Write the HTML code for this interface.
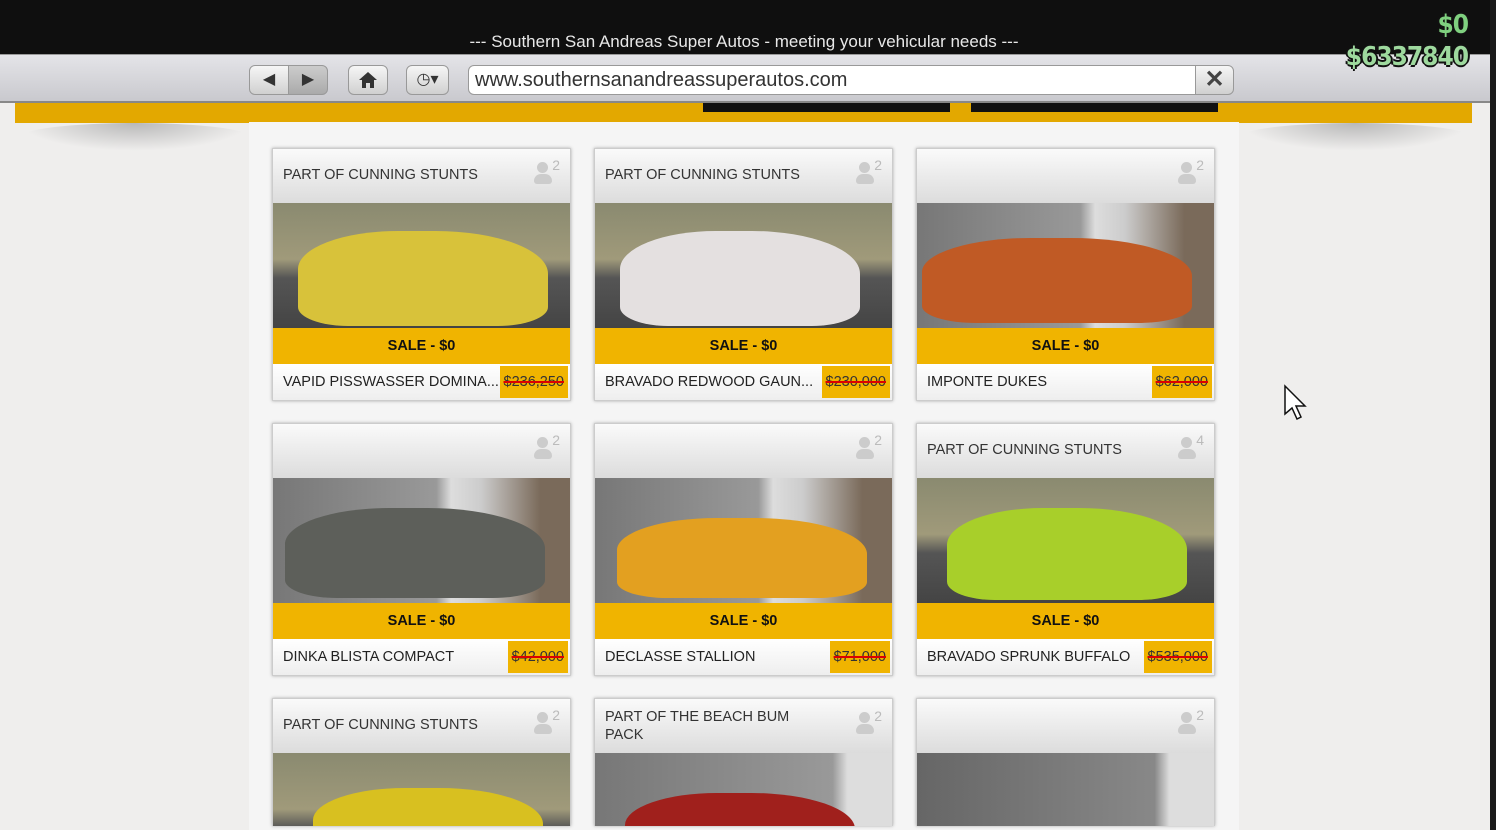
<!DOCTYPE html>
<html style="width:1496px;height:830px;overflow:hidden"><head><meta charset="utf-8"><style>
*{margin:0;padding:0;box-sizing:border-box}
body{width:1496px;height:830px;overflow:hidden;background:#efeeed;font-family:"Liberation Sans",sans-serif;position:relative}
.top{position:absolute;left:0;top:0;width:1496px;height:54px;background:#0f0f0f}
.title{position:absolute;top:32px;left:0;width:1488px;text-align:center;color:#e8e8e8;font-size:17px}
.bar{position:absolute;left:0;top:54px;width:1490px;height:49px;background:linear-gradient(#e4e4e8,#c9c9ce);border-top:1px solid #999;border-bottom:2px solid #888}
.rstrip{position:absolute;right:0;top:0;width:6px;height:830px;background:#1a1a1a}
.btn{position:absolute;top:65px;height:30px;border:1px solid #999;border-radius:6px;background:linear-gradient(#f6f6f6,#d0d0d0);color:#333;font-size:16px;text-align:center;line-height:28px}
.url{position:absolute;left:468px;top:65px;width:728px;height:30px;background:#fff;border:1px solid #999;border-radius:6px 0 0 6px;font-size:20px;color:#333;padding-left:6px;line-height:28px}
.x{position:absolute;left:1195px;top:65px;width:39px;height:30px;border:1px solid #999;border-radius:0 6px 6px 0;background:linear-gradient(#f6f6f6,#d0d0d0);font-size:24px;line-height:28px;text-align:center;color:#444;font-weight:bold}
.money{position:absolute;right:28px;font-family:"DejaVu Sans Condensed","DejaVu Sans",sans-serif;font-weight:bold;color:#9ed99e;text-shadow:-2px 0 #111,2px 0 #111,0 -2px #111,0 2px #111;letter-spacing:-1px}
.yb{position:absolute;left:15px;top:103px;width:1457px;height:20px;background:#e3a800}
.shadow{position:absolute;top:123px;height:28px;border-radius:50%;background:radial-gradient(ellipse at top,#b8b8b8,transparent 70%)}
.panel{position:absolute;left:249px;top:122px;width:990px;height:708px;background:#f5f5f5}
.card{position:absolute;width:299px;height:253px;background:#fff;box-shadow:0 0 3px #aaa;border:1px solid #ccc;overflow:hidden}
.hd{height:54px;background:linear-gradient(#fafafa,#dcdcdc);position:relative;font-size:14.5px;color:#333;padding:18px 10px 0}
.hd.two{padding-top:9px;line-height:18px}
.p{position:absolute;right:10px;top:9px;width:26px;height:30px}
.p i{position:absolute;left:3px;top:4px;width:11px;height:11px;border-radius:50%;background:#ccc}
.p b{position:absolute;left:0;top:16px;width:18px;height:10px;border-radius:7px 7px 3px 3px;background:#ccc}
.p span{position:absolute;right:0;top:-1px;font-size:14px;color:#bbb}
.img{height:125px;position:relative;overflow:hidden}
.sale{height:36px;background:#f0b400;text-align:center;font-size:14.5px;font-weight:bold;line-height:36px;color:#111}
.nm{height:36px;position:relative;font-size:14.5px;color:#222;line-height:36px;padding-left:10px;background:linear-gradient(#fff,#eee)}
.pr{position:absolute;right:2px;top:2px;height:32px;background:#f0b400;padding:0 4px;line-height:32px;color:#333;text-decoration:line-through;text-decoration-color:#d00;text-decoration-thickness:2px}
.car{position:absolute;border-radius:40% 45% 20% 20%}
</style></head><body>
<div class="top"></div>
<div class="title">--- Southern San Andreas Super Autos - meeting your vehicular needs ---</div>
<div class="bar"></div>
<div class="btn" style="left:249px;width:40px;border-radius:6px 0 0 6px">◀</div>
<div class="btn" style="left:288px;width:40px;border-radius:0 6px 6px 0;background:linear-gradient(#ccc,#aaa)">▶</div>
<div class="btn" style="left:348px;width:40px"><svg width="20" height="18" viewBox="0 0 20 18" style="margin-top:5px"><path d="M10 1 L19 9 H16 V17 H12 V12 H8 V17 H4 V9 H1 Z" fill="#333"/></svg></div>
<div class="btn" style="left:406px;width:43px">◷▾</div>
<div class="url">www.southernsanandreassuperautos.com</div>
<div class="x">✕</div>
<div class="money" style="top:10px;font-size:26px;color:#7fd07f">$0</div>
<div class="money" style="top:42px;font-size:26px">$6337840</div>
<div class="yb"></div>
<div style="position:absolute;left:703px;top:103px;width:247px;height:9px;background:#111"></div>
<div style="position:absolute;left:971px;top:103px;width:247px;height:9px;background:#111"></div>
<div class="shadow" style="left:20px;width:230px"></div>
<div class="shadow" style="left:1240px;width:230px"></div>
<div class="panel"></div>
<div class="rstrip"></div>
<svg style="position:absolute;left:1283px;top:384px" width="26" height="38" viewBox="0 0 26 38"><path d="M2 2 L2 30 L9 24 L14 35 L18 33 L13 22 L22 22 Z" fill="#fff" stroke="#111" stroke-width="1.5"/></svg>

<div class="card" style="left:272px;top:148px"><div class="hd">PART OF CUNNING STUNTS<div class="p"><i></i><b></b><span>2</span></div></div>
<div class="img" style="background:linear-gradient(#8a8a70 0,#a09a7a 45%,#555 60%,#444)"><div class="car" style="left:25px;top:28px;width:250px;height:95px;background:#d8c23a"></div></div>
<div class="sale">SALE - $0</div><div class="nm">VAPID PISSWASSER DOMINA...<span class="pr">$236,250</span></div></div>
<div class="card" style="left:594px;top:148px"><div class="hd">PART OF CUNNING STUNTS<div class="p"><i></i><b></b><span>2</span></div></div>
<div class="img" style="background:linear-gradient(#8a8a70 0,#a09a7a 45%,#555 60%,#444)"><div class="car" style="left:25px;top:28px;width:240px;height:95px;background:#e4e0e0"></div></div>
<div class="sale">SALE - $0</div><div class="nm">BRAVADO REDWOOD GAUN...<span class="pr">$230,000</span></div></div>
<div class="card" style="left:916px;top:148px"><div class="hd"><div class="p"><i></i><b></b><span>2</span></div></div>
<div class="img" style="background:linear-gradient(90deg,#777 0,#999 55%,#ddd 60%,#ccc 70%,#7a6a5a 90%)"><div class="car" style="left:5px;top:35px;width:270px;height:85px;background:#c05a25"></div></div>
<div class="sale">SALE - $0</div><div class="nm">IMPONTE DUKES<span class="pr">$62,000</span></div></div>

<div class="card" style="left:272px;top:423px"><div class="hd"><div class="p"><i></i><b></b><span>2</span></div></div>
<div class="img" style="background:linear-gradient(90deg,#777 0,#999 55%,#ddd 60%,#ccc 70%,#7a6a5a 90%)"><div class="car" style="left:12px;top:30px;width:260px;height:90px;background:#5d5f5a"></div></div>
<div class="sale">SALE - $0</div><div class="nm">DINKA BLISTA COMPACT<span class="pr">$42,000</span></div></div>
<div class="card" style="left:594px;top:423px"><div class="hd"><div class="p"><i></i><b></b><span>2</span></div></div>
<div class="img" style="background:linear-gradient(90deg,#777 0,#999 55%,#ddd 60%,#ccc 70%,#7a6a5a 90%)"><div class="car" style="left:22px;top:40px;width:250px;height:80px;background:#e3a020"></div></div>
<div class="sale">SALE - $0</div><div class="nm">DECLASSE STALLION<span class="pr">$71,000</span></div></div>
<div class="card" style="left:916px;top:423px"><div class="hd">PART OF CUNNING STUNTS<div class="p"><i></i><b></b><span>4</span></div></div>
<div class="img" style="background:linear-gradient(#8a8a70 0,#a09a7a 45%,#555 60%,#444)"><div class="car" style="left:30px;top:30px;width:240px;height:92px;background:#a8cf2a"></div></div>
<div class="sale">SALE - $0</div><div class="nm">BRAVADO SPRUNK BUFFALO<span class="pr">$535,000</span></div></div>

<div class="card" style="left:272px;top:698px;height:128px;border-bottom:none"><div class="hd">PART OF CUNNING STUNTS<div class="p"><i></i><b></b><span>2</span></div></div>
<div class="img" style="background:linear-gradient(#8a8a70 0,#a09a7a 45%,#555 60%,#444)"><div class="car" style="left:40px;top:35px;width:230px;height:80px;background:#d8c020"></div></div></div>
<div class="card" style="left:594px;top:698px;height:128px;border-bottom:none"><div class="hd two">PART OF THE BEACH BUM<br>PACK<div class="p"><i></i><b></b><span>2</span></div></div>
<div class="img" style="background:linear-gradient(90deg,#777 0,#999 80%,#ddd 85%)"><div class="car" style="left:30px;top:40px;width:230px;height:80px;background:#a0201c"></div></div></div>
<div class="card" style="left:916px;top:698px;height:128px;border-bottom:none"><div class="hd"><div class="p"><i></i><b></b><span>2</span></div></div>
<div class="img" style="background:linear-gradient(90deg,#666 0,#888 80%,#ddd 85%)"></div></div>
</body></html>
